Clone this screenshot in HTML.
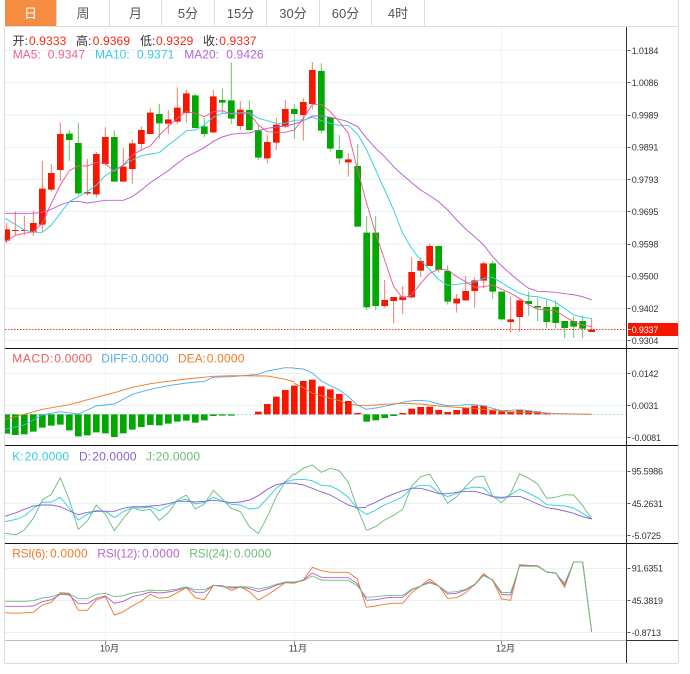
<!DOCTYPE html>
<html lang="zh"><head><meta charset="utf-8"><title>K线图</title>
<style>
html,body{margin:0;padding:0;background:#fff;width:690px;height:674px;overflow:hidden}
svg{display:block;position:absolute;left:0;top:0}
text{font-family:"Liberation Sans","Noto Sans CJK SC",sans-serif}
.tab{font-size:13px;fill:#555;text-anchor:middle}
.lg{font-size:12px}
.ax{font-size:9px;fill:#333}
.mo{font-size:9px;fill:#333}
.l{fill:none;stroke-width:2.8}
</style></head><body>
<svg width="690" height="674" viewBox="0 0 690 674" xmlns="http://www.w3.org/2000/svg">
<defs><clipPath id="c"><rect x="5" y="27" width="621" height="613"/></clipPath></defs>

<!-- tabs -->
<rect x="5" y="0" width="51" height="26" fill="#f58c41"/>
<path d="M56.5 0V26M109.5 0V26M161.5 0V26M214.5 0V26M266.5 0V26M319.5 0V26M371.5 0V26M424.5 0V26" stroke="#dedede"/>
<path d="M5 26.5H678M4.5 27V663.5H678M678.5 0V663.5" stroke="#dcdcdc" fill="none"/>
<text x="30.5" y="18" class="tab" style="fill:#fff">日</text>
<text x="83" y="18" class="tab">周</text>
<text x="135.5" y="18" class="tab">月</text>
<text x="188" y="18" class="tab">5分</text>
<text x="240.5" y="18" class="tab">15分</text>
<text x="293" y="18" class="tab">30分</text>
<text x="345.5" y="18" class="tab">60分</text>
<text x="398" y="18" class="tab">4时</text>

<!-- grid -->
<path d="M5 50.3H626M5 82.4H626M5 115H626M5 147.2H626M5 179.4H626M5 211.6H626M5 244H626M5 276.2H626M5 308.4H626M5 340.6H626M5 373.4H626M5 405.4H626M5 437.4H626M5 471.4H626M5 503.4H626M5 535.4H626M5 568.4H626M5 600.4H626M5 632.4H626" stroke="#e7eff3" fill="none"/>
<path d="M105.5 27V640M294.5 27V640M501.5 27V640" stroke="#eef4f7" fill="none"/>

<g clip-path="url(#c)">
<!-- price line -->
<path d="M5 329.5H626" stroke="#f0392b" stroke-dasharray="1.5 1.5" fill="none"/>

<!-- candles A -->
<g transform="scale(.33333)">
<path fill="none" stroke="#f7796c" stroke-width="3" d="M20 668V730M46 634V706M73 647V706M100 632V708M127 483V695M154 492V575M181 368V543M262 477V587M289 456V592M316 382V497M370 444V545M397 418V551M424 379V450M451 324V402M505 330V402M532 262V372M559 269V368M640 270V400M721 303V390M802 405V490M829 353V450M856 300V385M910 294V422M937 186V328"/>
<path fill="none" stroke="#6cc46c" stroke-width="3" d="M208 390V483M235 368V585M343 391V545M478 312V417M586 281V384M613 354V412M667 266V340M694 187V372M748 302V392M775 374V480M883 312V417M964 190V400M991 350V455M1018 405V494"/>
<path fill="#f51700" d="M10 688h20v34h-20zM36 690h20v3h-20zM63 690h20v3h-20zM90 669h20v26h-20zM117 566h20v108h-20zM144 519h20v50h-20zM171 402h20v108h-20zM252 576h20v5h-20zM279 462h20v121h-20zM306 411h20v81h-20zM360 500h20v45h-20zM387 430h20v77h-20zM414 390h20v42h-20zM441 338h20v64h-20zM495 358h20v13h-20zM522 323h20v42h-20zM549 280h20v59h-20zM630 289h20v108h-20zM711 329h20v49h-20zM792 426h20v49h-20zM819 374h20v54h-20zM846 327h20v53h-20zM900 306h20v39h-20zM927 210h20v102h-20z"/>
<path fill="#00a800" d="M198 401h20v19h-20zM225 429h20v151h-20zM333 411h20v134h-20zM468 342h20v28h-20zM576 286h20v98h-20zM603 379h20v23h-20zM657 300h20v8h-20zM684 301h20v55h-20zM738 330h20v60h-20zM765 390h20v83h-20zM873 327h20v15h-20zM954 213h20v179h-20zM981 352h20v94h-20zM1008 450h20v25h-20z"/>
<polyline class="l" stroke="#b75fd0" points="15,640 100,640 127,637 154,628 181,615 208,605 235,604 262,609 289,605 316,601 343,601 370,601 397,590 424,570 451,548 478,530 505,512 532,490 559,470 586,457 613,443 640,424 667,411 694,403 721,400 748,399 775,392 802,385 829,381 856,378 883,372 910,362 937,348 964,348 991,352 1018,358"/>
<polyline class="l" stroke="#31cfe2" points="15,655 49,675 73,690 100,697 127,697 154,675 181,640 208,605 235,590 262,575 289,555 316,527 343,510 370,495 397,480 424,467 451,462 478,458 505,435 532,415 559,392 586,390 613,375 640,352 667,340 694,340 721,338 748,338 775,355 802,362 829,370 856,370 883,361 910,360 937,352 964,362 991,370 1018,376"/>
<polyline class="l" stroke="#f0568f" points="15,725 49,705 73,700 100,695 127,670 154,610 181,555 208,512 235,497 262,498 289,487 316,490 343,515 370,495 397,465 424,450 451,438 478,405 505,380 532,355 559,335 586,340 613,350 640,335 667,332 694,343 721,340 748,340 775,375 802,395 829,397 856,397 883,390 910,355 937,313 964,313 991,335 1018,365"/>
</g>

<!-- candles B -->
<g transform="scale(.33333) translate(1035,0)">
<path fill="none" stroke="#f7796c" stroke-width="3" d="M10 460V530M119 840V923M146 892V970M173 858V942M200 771V895M227 773V830M254 731V798M335 882V938M362 828V903M389 832V923M416 785V865M497 890V998M524 895V995M740 955V996"/>
<path fill="none" stroke="#6cc46c" stroke-width="3" d="M38 432V680M65 648V930M92 648V930M281 738V818M308 796V914M443 782V896M470 875V962M551 874V947M578 893V963M605 900V984M632 902V984M659 963V1014M686 950V1014M713 947V1014"/>
<path fill="#f51700" d="M0 478h20v9h-20zM109 900h20v18h-20zM136 891h20v12h-20zM163 890h20v10h-20zM190 816h20v76h-20zM217 783h20v29h-20zM244 738h20v60h-20zM325 896h20v14h-20zM352 873h20v28h-20zM379 841h20v32h-20zM406 790h20v52h-20zM487 958h20v8h-20zM514 901h20v50h-20zM730 989h20v7h-20z"/>
<path fill="#00a800" d="M28 498h20v182h-20zM55 698h20v224h-20zM82 698h20v220h-20zM271 738h20v72h-20zM298 813h20v92h-20zM433 790h20v85h-20zM460 875h20v83h-20zM541 903h20v9h-20zM568 918h20v5h-20zM595 921h20v45h-20zM622 921h20v48h-20zM649 963h20v21h-20zM676 963h20v17h-20zM703 963h20v23h-20z"/>
<polyline class="l" stroke="#b75fd0" points="-17,358 0,362 38,380 65,415 92,445 119,470 146,500 173,525 200,548 227,570 254,587 281,605 308,630 335,660 362,687 389,710 416,735 443,770 470,798 497,822 524,845 551,865 578,874 605,875 632,877 659,881 686,884 713,890 740,900"/>
<polyline class="l" stroke="#31cfe2" points="-17,376 10,376 38,402 65,450 92,510 119,570 146,630 173,700 200,745 227,780 254,810 281,838 308,856 335,853 362,850 389,846 416,835 443,832 470,848 497,865 524,880 551,888 578,890 605,897 632,907 659,925 686,945 713,952 740,956"/>
<polyline class="l" stroke="#f0568f" points="-17,365 10,400 38,510 65,610 92,700 119,780 146,860 173,895 200,885 227,850 254,820 281,808 308,810 335,830 362,845 389,862 416,860 443,855 470,868 497,880 524,895 551,915 578,928 605,930 632,932 659,950 686,965 713,975 740,980"/>
</g>

<!-- MACD -->
<path d="M5 414.5H626" stroke="#a6dcf2" stroke-dasharray="2 2" fill="none"/>
<g transform="scale(.33333) translate(0,600)">
<path fill="#00a800" d="M10 643h20v58h-20zM36 643h20v62h-20zM63 643h20v60h-20zM90 643h20v52h-20zM117 643h20v40h-20zM144 643h20v34h-20zM171 643h20v31h-20zM198 643h20v48h-20zM225 643h20v66h-20zM252 643h20v63h-20zM279 643h20v54h-20zM306 643h20v57h-20zM333 643h20v68h-20zM360 643h20v57h-20zM387 643h20v46h-20zM414 643h20v38h-20zM441 643h20v32h-20zM468 643h20v33h-20zM495 643h20v28h-20zM522 643h20v22h-20zM549 643h20v19h-20zM576 643h20v25h-20zM603 643h20v18h-20zM630 643h20v5h-20zM657 643h20v4h-20zM684 643h20v4h-20z"/>
<path fill="#f51700" d="M765 635h20v8h-20zM792 612h20v31h-20zM819 590h20v53h-20zM846 570h20v73h-20zM873 557h20v86h-20zM900 543h20v100h-20zM927 539h20v104h-20zM954 559h20v84h-20zM981 568h20v75h-20zM1008 582h20v61h-20z"/>
<polyline class="l" stroke="#55abf2" points="15,688 73,675 127,645 181,635 235,642 289,618 343,612 397,583 451,568 505,557 559,549 613,544 640,532 694,530 775,523 802,513 856,503 883,504"/>
<polyline class="l" stroke="#f37a28" points="15,658 73,643 127,628 208,614 289,592 343,578 397,562 451,551 505,544 559,537 640,529 694,527 802,528 856,538 883,546"/>
</g>
<g transform="scale(.33333) translate(870,1035)">
<polyline class="l" stroke="#55abf2" points="13,70 40,72 67,84 94,108 121,122 148,135 175,155 202,180 229,193"/>
<polyline class="l" stroke="#f37a28" points="13,115 40,128 67,145 94,152 121,160 148,167 175,177 202,181 229,182"/>
<!-- KDJ mid -->
<polyline class="l" stroke="#6dbe78" points="13,390 40,370 67,360 94,382 121,370 148,377 175,412 202,490 229,555"/>
<polyline class="l" stroke="#31cfe2" points="13,404 40,403 67,407 94,421 121,423 148,436 175,457 202,490 229,508"/>
<polyline class="l" stroke="#8a62cf" points="13,415 40,420 67,430 94,441 121,450 148,465 175,480 202,489 229,487"/>
<!-- RSI mid -->
<polyline class="l" stroke="#f37a28" points="13,715 40,705 67,667 94,677 121,682 148,682 175,682 202,702 229,787"/>
<polyline class="l" stroke="#b75fd0" points="13,712 40,705 67,684 94,697 121,698 148,698 175,698 202,716 229,765"/>
<polyline class="l" stroke="#6dbe78" points="13,711 40,707 67,693 94,705 121,706 148,706 175,706 202,722 229,757"/>
</g>
<g transform="scale(.33333) translate(1035,1020)">
<path fill="#f51700" d="M0 183h20v40h-20zM28 219h20v4h-20zM163 219h20v4h-20zM190 206h20v17h-20zM217 201h20v22h-20zM244 200h20v23h-20zM271 210h20v13h-20zM298 216h20v7h-20zM325 210h20v13h-20zM352 203h20v20h-20zM379 197h20v26h-20zM406 197h20v26h-20zM433 209h20v14h-20zM460 214h20v9h-20zM487 214h20v9h-20zM514 209h20v14h-20zM541 211h20v12h-20zM568 214h20v9h-20zM595 221h20v2h-20z"/>
<path fill="#00a800" d="M55 223h20v22h-20zM82 223h20v18h-20zM109 223h20v11h-20zM136 223h20v5h-20z"/>
<polyline class="l" stroke="#55abf2" points="64,208 92,204 119,199 146,193 173,187 200,182 227,181 254,184 281,192 308,197 335,197 362,194 389,194 416,197 443,205 470,212 497,211 524,209 551,212 578,215 605,219 632,221 740,223"/>
<polyline class="l" stroke="#f37a28" points="64,197 119,193 173,190 227,192 281,198 335,202 389,205 443,211 497,216 551,217 605,220 740,223"/>
<!-- KDJ right -->
<polyline class="l" stroke="#6dbe78" points="64,571 92,560 119,540 146,526 173,508 200,438 227,410 254,403 281,445 308,490 335,470 362,440 389,412 416,408 443,468 470,488 497,460 524,401 551,415 578,432 605,475 632,472 659,464 686,465 713,497 740,537"/>
<polyline class="l" stroke="#31cfe2" points="64,524 92,510 119,495 146,483 173,470 200,445 227,436 254,436 281,458 308,470 335,460 362,446 389,441 416,444 443,470 470,476 497,465 524,447 551,460 578,473 605,494 632,496 659,498 686,504 713,520 740,537"/>
<polyline class="l" stroke="#8a62cf" points="64,499 92,487 119,473 146,462 173,452 200,445 227,445 254,452 281,461 308,461 335,457 362,454 389,454 416,461 443,470 470,472 497,470 524,469 551,480 578,492 605,503 632,507 659,513 686,520 713,530 740,537"/>
<!-- RSI right -->
<polyline class="l" stroke="#f37a28" points="64,802 92,798 119,793 146,790 173,790 200,758 227,738 254,717 281,738 308,775 335,773 362,758 389,733 416,701 443,722 470,777 497,781 524,674 551,676 578,677 605,696 632,699 659,742 686,666 713,666 740,876"/>
<polyline class="l" stroke="#b75fd0" points="64,781 92,779 119,774 146,772 173,772 200,750 227,738 254,725 281,738 308,762 335,760 362,750 389,735 416,705 443,720 470,763 497,765 524,676 551,678 578,678 605,696 632,699 659,735 686,666 713,666 740,876"/>
<polyline class="l" stroke="#6dbe78" points="64,772 92,770 119,767 146,766 173,766 200,748 227,738 254,729 281,738 308,757 335,755 362,748 389,733 416,707 443,720 470,757 497,758 524,678 551,679 578,679 605,696 632,700 659,730 686,666 713,666 740,876"/>
</g>
<!-- KDJ & RSI left -->
<g transform="scale(.33333) translate(0,1320)">
<polyline class="l" stroke="#6dbe78" points="15,280 49,284 73,270 100,235 127,180 154,163 181,113 208,180 235,268 262,243 289,195 316,222 343,272 370,235 397,203 424,212 451,208 478,241 505,218 532,180 559,165 586,207 613,192 640,151 667,177 694,205 721,215 748,260 775,281 802,230 829,170 856,125 883,100"/>
<polyline class="l" stroke="#31cfe2" points="15,245 49,238 73,228 100,205 127,187 154,186 181,172 208,205 235,240 262,223 289,211 316,214 343,233 370,215 397,203 424,204 451,201 478,212 505,198 532,183 559,178 586,192 613,187 640,172 667,183 694,193 721,195 748,207 775,204 802,175 829,145 856,125 883,119"/>
<polyline class="l" stroke="#8a62cf" points="15,229 49,218 73,208 100,198 127,195 154,195 181,200 208,213 235,224 262,217 289,214 316,214 343,214 370,205 397,200 424,200 451,198 478,196 505,191 532,184 559,184 586,186 613,184 640,181 667,184 694,188 721,186 748,180 775,167 802,148 829,134 856,129 883,130"/>
<polyline class="l" stroke="#f37a28" points="15,518 49,520 100,517 127,495 154,487 181,458 208,460 235,511 262,511 289,480 316,470 343,525 370,515 397,498 424,483 451,463 478,475 505,472 532,458 559,443 586,473 613,479 640,436 667,437 694,451 721,440 748,455 775,480 802,465 829,447 856,428 883,430"/>
<polyline class="l" stroke="#b75fd0" points="15,499 73,499 100,498 127,485 154,479 181,463 208,465 235,491 262,491 289,475 316,468 343,490 370,484 397,470 424,464 451,456 478,459 505,456 532,451 559,442 586,457 613,457 640,436 667,438 694,444 721,441 748,446 775,455 802,447 829,436 856,428 883,427"/>
<polyline class="l" stroke="#6dbe78" points="15,484 73,484 100,482 127,474 154,470 181,461 208,462 235,476 262,476 289,463 316,460 343,470 370,467 397,459 424,455 451,450 478,452 505,451 532,447 559,441 586,449 613,449 640,436 667,440 694,441 721,440 748,441 775,447 802,442 829,433 856,426 883,426"/>
</g>
</g>

<!-- separators -->
<path d="M5 348.5H678M5 445.5H678M5 543.5H678" stroke="#151515" fill="none"/>
<path d="M5 640.5H626" stroke="#bdbdbd" fill="none"/>
<path d="M626 640.5H678" stroke="#333" fill="none"/>
<path d="M626.5 27V663" stroke="#333" fill="none"/>
<path d="M105.5 641V645M294.5 641V645M501.5 641V645" stroke="#888" fill="none"/>

<!-- legend 1 -->
<g class="lg">
<text x="12.5" y="45" fill="#333">开:</text><text x="29" y="45" fill="#f5281a" textLength="37.3">0.9333</text>
<text x="76" y="45" fill="#333">高:</text><text x="92.7" y="45" fill="#f5281a" textLength="37.3">0.9369</text>
<text x="140" y="45" fill="#333">低:</text><text x="156" y="45" fill="#f5281a" textLength="37.3">0.9329</text>
<text x="203" y="45" fill="#333">收:</text><text x="219.3" y="45" fill="#f5281a" textLength="37.3">0.9337</text>
<text x="12.7" y="58.7" fill="#f0619a">MA5:</text><text x="47.7" y="58.7" fill="#f0619a" textLength="37.3">0.9347</text>
<text x="95" y="58.7" fill="#38cde0">MA10:</text><text x="137" y="58.7" fill="#38cde0" textLength="37.3">0.9371</text>
<text x="184.3" y="58.7" fill="#b864d2">MA20:</text><text x="226.3" y="58.7" fill="#b864d2" textLength="37.3">0.9426</text>

<text x="12.3" y="362.7" fill="#f25c5c" textLength="41">MACD:</text><text x="54.3" y="362.7" fill="#f25c5c" textLength="37.7">0.0000</text>
<text x="101.3" y="362.7" fill="#55abf2">DIFF:</text><text x="131" y="362.7" fill="#55abf2" textLength="37.7">0.0000</text>
<text x="178" y="362.7" fill="#f37a28">DEA:</text><text x="206.7" y="362.7" fill="#f37a28" textLength="37.7">0.0000</text>

<text x="12.3" y="460.7" fill="#38cde0">K:</text><text x="24.7" y="460.7" fill="#38cde0" textLength="44.3">20.0000</text>
<text x="79" y="460.7" fill="#8a62cf">D:</text><text x="92.3" y="460.7" fill="#8a62cf" textLength="44.3">20.0000</text>
<text x="146" y="460.7" fill="#6dbe78">J:</text><text x="155.7" y="460.7" fill="#6dbe78" textLength="44.3">20.0000</text>

<text x="12.3" y="557.7" fill="#f37a28" textLength="36">RSI(6):</text><text x="50" y="557.7" fill="#f37a28" textLength="37.7">0.0000</text>
<text x="97.3" y="557.7" fill="#b864d2" textLength="43">RSI(12):</text><text x="142" y="557.7" fill="#b864d2" textLength="37.7">0.0000</text>
<text x="189.3" y="557.7" fill="#6dbe78" textLength="42.7">RSI(24):</text><text x="233.7" y="557.7" fill="#6dbe78" textLength="37.7">0.0000</text>
</g>

<!-- axis ticks -->
<path d="M627.5 50.5H630.5M627.5 82.5H630.5M627.5 115.5H630.5M627.5 147.5H630.5M627.5 179.5H630.5M627.5 211.5H630.5M627.5 244.5H630.5M627.5 276.5H630.5M627.5 308.5H630.5M627.5 340.5H630.5M627.5 373.5H630.5M627.5 405.5H630.5M627.5 437.5H630.5M627.5 471.5H630.5M627.5 503.5H630.5M627.5 535.5H630.5M627.5 568.5H630.5M627.5 600.5H630.5M627.5 632.5H630.5" stroke="#555" fill="none"/>
<g class="ax">
<text x="631.7" y="54" textLength="26.7">1.0184</text>
<text x="631.7" y="86" textLength="26.7">1.0086</text>
<text x="631.7" y="118.5" textLength="26.7">0.9989</text>
<text x="631.7" y="150.7" textLength="26.7">0.9891</text>
<text x="631.7" y="183" textLength="26.7">0.9793</text>
<text x="631.7" y="215" textLength="26.7">0.9695</text>
<text x="631.7" y="247.5" textLength="26.7">0.9598</text>
<text x="631.7" y="279.7" textLength="26.7">0.9500</text>
<text x="631.7" y="312" textLength="26.7">0.9402</text>
<text x="631.7" y="344" textLength="26.7">0.9304</text>
<text x="631.7" y="377" textLength="26.7">0.0142</text>
<text x="631.7" y="409" textLength="26.7">0.0031</text>
<text x="631.7" y="441" textLength="29.3">-0.0081</text>
<text x="631.7" y="474.7" textLength="31.3">95.5986</text>
<text x="631.7" y="507" textLength="31.3">45.2631</text>
<text x="631.7" y="539" textLength="29.3">-5.0725</text>
<text x="631.7" y="571.7" textLength="31.3">91.6351</text>
<text x="631.7" y="604" textLength="31.3">45.3819</text>
<text x="631.7" y="636" textLength="29.3">-0.8713</text>
</g>
<rect x="628" y="323" width="50" height="13" fill="#f51700"/>
<path d="M628 329.5H631" stroke="#fff" fill="none"/>
<text x="631.7" y="333" class="ax" style="fill:#fff" textLength="26.7">0.9337</text>

<!-- months -->
<text x="100" y="651.7" class="mo">10月</text>
<text x="288.7" y="651.7" class="mo">11月</text>
<text x="496" y="651.7" class="mo">12月</text>
</svg>
</body></html>
